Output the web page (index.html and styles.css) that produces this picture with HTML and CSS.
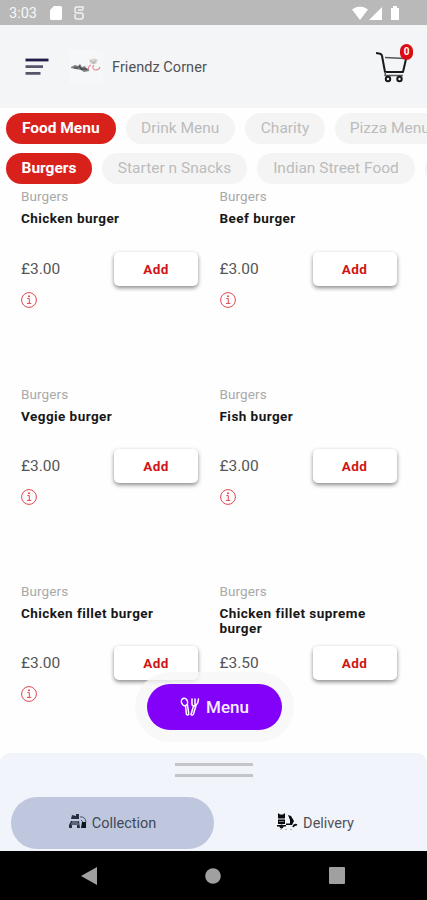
FILE: index.html
```html
<!DOCTYPE html>
<html lang="en">
<head>
<meta charset="utf-8">
<title>Friendz Corner</title>
<link rel="stylesheet" href="styles.css">
</head>
<body>
<svg width="0" height="0" class="defs">
  <symbol id="info" viewBox="0 0 18 18"><g fill="none" stroke="#df4850" stroke-width="1"><circle cx="9" cy="9" r="7.4"/><path d="M7.3 7.6h2v4.500M7 12.400h4.300"/></g><circle cx="9" cy="5.200" r="1" fill="#df4850"/></symbol>
</svg>
<div class="screen">
  <div class="status">
    <span class="time">3:03</span>
    <svg class="sd" width="12" height="14" viewBox="0 0 12 14"><path d="M4 0h6.500Q12 0 12 1.500v11Q12 14 10.500 14h-9Q0 14 0 12.500V4z" fill="#fff"/></svg>
    <svg class="sync" width="10" height="14" viewBox="0 0 10 14"><path d="M9 3.500V1H3Q1 1 1 3v2q0 2 2 2h4q2 0 2 2v2q0 2-2 2H3q-2 0-2-2V8M4 4h5" fill="none" stroke="#f1f1f1" stroke-width="1.500"/></svg>
    <svg class="signals" width="48" height="15" viewBox="0 0 48 15" fill="#fff"><path d="M0 3.500Q8-2.500 16 3.500L8 14zM30 1v13H17zM39 2h2V0h4v2h2v12h-8z"/></svg>
  </div>
  <header class="header">
    <svg class="burger" width="24" height="18" viewBox="0 0 24 18"><path d="M.5 2h23" stroke="#211a48" stroke-width="2.800"/><path d="M.5 8.700h17.500M.5 15.300h15" stroke="#57546c" stroke-width="2.800"/></svg>
    <svg class="logo" width="34" height="34" viewBox="0 0 34 34"><rect width="34" height="34" fill="#f6f7f8"/><path d="M2 17l4-2 3 1 2-2 2 3 3-1 1 2 3 1v2l-5 1-3-2-5-1-5-1z" fill="#7b7e80"/><path d="M5 18h4m3 1h6M10 16l3 4" stroke="#393d40" stroke-width="1.200"/><path d="M20 10q5-3 9 0l-2 4h-5z" fill="#d9d5d0"/><path d="M21 11l5 2m1-3l-3 4" stroke="#aaa" stroke-width=".8"/><path d="M22 15q-4 2-2 5m5-5q-3 3 1 5 4 0 5-3" fill="none" stroke="#e58c95" stroke-width="1.200"/></svg>
    <span class="title">Friendz Corner</span>
    <div class="cart">
      <svg width="32" height="32" viewBox="0 0 32 32" fill="none" stroke="#17191a" stroke-linejoin="round"><path d="M0 2l4 .8q1.500.2 2 2L9 21h18l3-13" stroke-width="2"/><path d="M9 6.500l20 1M9.500 21l-.5 3.500H27" stroke-width="1.500" stroke="#55585a"/><circle cx="12" cy="28" r="2.200" stroke-width="2"/><circle cx="23.500" cy="28" r="2.200" stroke-width="2"/></svg>
      <span class="badge">0</span>
    </div>
  </header>
  <nav class="chips first">
    <span class="chip on w109">Food Menu</span><span class="chip w109">Drink Menu</span><span class="chip w80">Charity</span><span class="chip w109">Pizza Menu</span>
  </nav>
  <nav class="chips second">
    <span class="chip on w86">Burgers</span><span class="chip w145">Starter n Snacks</span><span class="chip w158">Indian Street Food</span><span class="chip w86"></span>
  </nav>
  <main class="items">
    <article class="item"><p class="cat">Burgers</p><h2>Chicken burger</h2><div class="buy"><span>£3.00</span><button>Add</button></div><svg class="info"><use href="#info"/></svg></article>
    <article class="item"><p class="cat">Burgers</p><h2>Beef burger</h2><div class="buy"><span>£3.00</span><button>Add</button></div><svg class="info"><use href="#info"/></svg></article>
    <article class="item"><p class="cat">Burgers</p><h2>Veggie burger</h2><div class="buy"><span>£3.00</span><button>Add</button></div><svg class="info"><use href="#info"/></svg></article>
    <article class="item"><p class="cat">Burgers</p><h2>Fish burger</h2><div class="buy"><span>£3.00</span><button>Add</button></div><svg class="info"><use href="#info"/></svg></article>
    <article class="item"><p class="cat">Burgers</p><h2>Chicken fillet burger</h2><div class="buy"><span>£3.00</span><button>Add</button></div><svg class="info"><use href="#info"/></svg></article>
    <article class="item"><p class="cat">Burgers</p><h2>Chicken fillet supreme burger</h2><div class="buy"><span>£3.50</span><button>Add</button></div></article>
  </main>
  <div class="halo"><div class="menu">
    <svg width="20" height="20" viewBox="0 0 20 20" fill="none" stroke="#fff" stroke-width="1.500" stroke-linecap="round"><ellipse cx="4.500" cy="5" rx="3" ry="3.800" transform="rotate(-20 4.500 5)"/><path d="M5.500 9l1 8.500q1.500 1.200 2.300-.3L7.500 8M12 2v5q0 2 2.500 2Q18 8 18.500 2M15 2v6M13.500 9L11 17.500q1.500 1.500 2.500-.5L16 8.500"/></svg>
    <span>Menu</span>
  </div></div>
  <section class="sheet">
    <div class="handle"></div>
    <div class="modes">
      <div class="mode active">
        <svg width="18" height="17" viewBox="0 0 18 17"><path d="M2 6L3 2l4 1v3zM7 1h3v5H7zM2 8h8l1 7H8v-3H3v3H0v-3z" fill="#263041"/><path d="M3 9h6M2 11h8" stroke="#aab2c5" stroke-width=".8"/><path d="M11 4q5-1 6 5M12 7l3 3" fill="none" stroke="#4c566b"/><path d="M13 9h4v6h-5z" fill="#10151e"/></svg>
        <span>Collection</span>
      </div>
      <div class="mode">
        <svg width="21" height="17" viewBox="0 0 21 17"><path d="M1 0l2 1.500h3L8 0v5.500H1zM1 6.500h7V11H1zM0 12h9v1.500H0zM11 2l3 1 3 5-2 4H9v-1.500h4V7z" fill="#090a0d"/><path d="M2 8.500h5" stroke="#9699a1" stroke-width=".8"/><circle cx="4.500" cy="13.500" r="2" fill="#111"/><path d="M16 14q1-3 4-2" stroke="#111" stroke-width="1.800" fill="none"/><path d="M3 16.500h14" stroke="#aaa" stroke-width=".8" stroke-dasharray="2 3"/></svg>
        <span>Delivery</span>
      </div>
    </div>
  </section>
  <footer class="android">
    <svg width="16" height="18" viewBox="0 0 16 18"><path d="M16 0v18L0 9z"/></svg>
    <svg width="16" height="16" viewBox="0 0 16 16"><circle cx="8" cy="8" r="7.800"/></svg>
    <svg width="16" height="17" viewBox="0 0 16 17"><rect width="16" height="17" rx="1"/></svg>
  </footer>
</div>
</body>
</html>
```
FILE: styles.css
```css
* { box-sizing: border-box; }
body { margin: 0; font-family: Roboto, sans-serif; background: #fefefe; overflow: hidden; }
p, h2 { margin: 0; }
.defs { position: absolute; }
.screen { position: relative; width: 427px; height: 900px; display: flex; flex-direction: column; overflow: hidden; }
.status { height: 25px; flex: none; background: #b9b9b9; display: flex; align-items: center; padding: 1px 27px 0 9px; color: #f7f7f7; }
.time { font-size: 14.5px; width: 41px; padding-top: 1px; }
.sync { margin-left: 12px; }
.signals { margin-left: auto; }
.header { height: 83px; flex: none; background: #f3f5f7; display: flex; align-items: center; padding: 1px 19px 0 25px; }
.logo { margin-left: 20px; }
.title { font-size: 14.5px; letter-spacing: .05px; color: #505255; margin-left: 9px; }
.cart { position: relative; margin-left: auto; width: 32px; height: 32px; }
.badge { position: absolute; left: 24px; top: -7px; width: 13px; height: 16px; border-radius: 7px; background: #d90c13; color: #fff; font-size: 10px; font-weight: 700; line-height: 16px; text-align: center; }
.chips { display: flex; flex: none; gap: 10px; padding-left: 6px; }
.first { margin-top: 4.5px; }
.second { margin-top: 9.5px; }
.chip { flex: none; height: 31px; line-height: 31px; border-radius: 16px; text-align: center; background: #f4f4f4; color: #bcbcbc; font-size: 15.5px; white-space: nowrap; }
.on { background: #d9211c; color: #fff; font-weight: 700; }
.w109 { width: 109.5px; }
.w80 { width: 80px; }
.w86 { width: 86px; }
.w145 { width: 145px; }
.w158 { width: 158px; }
.items { flex: 1; min-height: 0; overflow: hidden; display: grid; grid-template-columns: 198.5px 198.5px; grid-auto-rows: 197.4px; padding: 3.2px 0 0 21px; }
.item { display: flex; flex-direction: column; padding-right: 21.5px; }
.cat { font-size: 13.5px; line-height: 18px; letter-spacing: .1px; color: #a9a9a9; }
h2 { font-size: 13.5px; font-weight: 700; line-height: 15.5px; letter-spacing: .45px; color: #171717; height: 38.5px; margin-top: 6px; }
.buy { display: flex; align-items: center; justify-content: space-between; height: 38px; color: #555; font-size: 15.5px; }
button { width: 84px; height: 34px; padding: 0; border: 0; border-radius: 5px; background: #fff; color: #cf1516; font: 700 13.5px Roboto, sans-serif; letter-spacing: .4px; box-shadow: 0 2px 4px rgba(0,0,0,.46); }
.info { width: 18px; height: 18px; margin: 3px 0 0 -1px; }
.halo { position: absolute; left: 135px; top: 672px; width: 159px; height: 70px; padding: 12px; border-radius: 35px; background: rgba(246,246,247,.8); }
.menu { height: 46px; border-radius: 23px; background: #8300f9; color: #f6edff; display: flex; align-items: center; justify-content: center; gap: 6px; font-size: 17px; font-weight: 500; }
.sheet { height: 98px; flex: none; background: #f2f4fb; border-radius: 10px 10px 0 0; padding: 10px 10px 0 11px; }
.handle { width: 78px; height: 14px; margin: 0 auto; border: solid #c4c5ca; border-width: 3px 0; }
.modes { display: flex; margin-top: 20px; }
.mode { width: 203px; height: 52px; border-radius: 26px; display: flex; align-items: center; justify-content: center; gap: 5px; font-size: 14.5px; color: #505258; }
.mode svg { margin-top: -4px; }
.active { background: #bec7de; color: #414857; }
.android { height: 49px; flex: none; background: #000; display: flex; align-items: center; justify-content: space-between; padding: 0 82px 0 81px; fill: #a0a0a0; }
```
